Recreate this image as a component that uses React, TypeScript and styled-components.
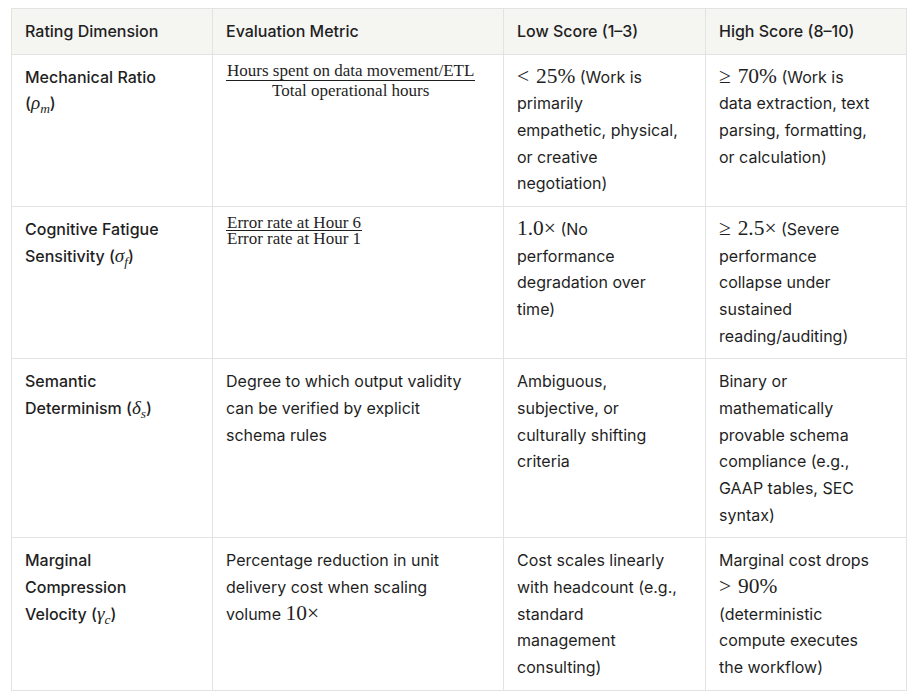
import React from 'react';
import styled, { createGlobalStyle } from 'styled-components';

const GlobalStyle = createGlobalStyle`
  html, body {
    margin: 0;
    padding: 0;
    background: #ffffff;
  }
  body {
    font-family: Inter, "Open Sans", Arial, sans-serif;
    color: #1f1f1f;
  }
`;

const Page = styled.div`
  padding: 8px 10px 8px 11px;
`;

const Table = styled.table`
  width: 895px;
  border-collapse: collapse;
  table-layout: fixed;
  font-size: 16px;
  line-height: 26.67px;
`;

const HeadCell = styled.th`
  background: #f5f5f2;
  border: 1px solid #e3e3e3;
  padding: 9px 13px;
  text-align: left;
  font-weight: 500;
  vertical-align: top;
  white-space: nowrap;
`;

const Cell = styled.td<{ $label?: boolean }>`
  border: 1px solid #e3e3e3;
  padding: 9px 13px;
  vertical-align: top;
  font-weight: ${(p) => (p.$label ? 500 : 400)};
`;

const Line = styled.span`
  display: block;
  white-space: nowrap;
`;

const Math = styled.span`
  font-family: "Liberation Serif", "DejaVu Serif", serif;
  font-size: 1.34em;
  font-weight: 400;
  white-space: nowrap;
  line-height: 0;
`;

const Rel = styled.span`
  margin-right: 0.32em;
`;

const Var = styled.i`
  font-family: "Liberation Serif", "DejaVu Serif", serif;
  font-size: 1.2em;
  font-weight: 400;
  line-height: 0;
`;

const Sub = styled.span`
  font-size: 0.7em;
  font-style: italic;
  vertical-align: -0.3em;
  line-height: 0;
`;

const Frac = styled.span<{ $tight?: boolean }>`
  display: inline-flex;
  flex-direction: column;
  align-items: center;
  vertical-align: top;
  font-family: "Liberation Serif", "DejaVu Serif", serif;
  font-size: 17px;
  margin-top: ${(p) => (p.$tight ? '0' : '-1px')};
`;

const Num = styled.span<{ $tight?: boolean }>`
  border-bottom: 1px solid #1f1f1f;
  padding: 0 1px ${(p) => (p.$tight ? '0' : '1px')};
  line-height: ${(p) => (p.$tight ? '14px' : '16px')};
`;

const Den = styled.span<{ $tight?: boolean }>`
  padding-top: ${(p) => (p.$tight ? '1px' : '2px')};
  line-height: ${(p) => (p.$tight ? '14px' : '16px')};
`;

const Lines = ({ items }: { items: React.ReactNode[] }) => (
  <>
    {items.map((t, i) => (
      <Line key={i}>{t}</Line>
    ))}
  </>
);

type Row = {
  label: React.ReactNode[];
  metric: React.ReactNode;
  low: React.ReactNode[];
  high: React.ReactNode[];
};

const rows: Row[] = [
  {
    label: [
      'Mechanical Ratio',
      <>
        (<Var>ρ<Sub>m</Sub></Var>)
      </>,
    ],
    metric: (
      <Frac>
        <Num>Hours spent on data movement/ETL</Num>
        <Den>Total operational hours</Den>
      </Frac>
    ),
    low: [
      <>
        <Math><Rel>&lt;</Rel>25%</Math> (Work is
      </>,
      'primarily',
      'empathetic, physical,',
      'or creative',
      'negotiation)',
    ],
    high: [
      <>
        <Math><Rel>≥</Rel>70%</Math> (Work is
      </>,
      'data extraction, text',
      'parsing, formatting,',
      'or calculation)',
    ],
  },
  {
    label: [
      'Cognitive Fatigue',
      <>
        Sensitivity (<Var>σ<Sub>f</Sub></Var>)
      </>,
    ],
    metric: (
      <Frac $tight>
        <Num $tight>Error rate at Hour 6</Num>
        <Den $tight>Error rate at Hour 1</Den>
      </Frac>
    ),
    low: [
      <>
        <Math>1.0×</Math> (No
      </>,
      'performance',
      'degradation over',
      'time)',
    ],
    high: [
      <>
        <Math><Rel>≥</Rel>2.5×</Math> (Severe
      </>,
      'performance',
      'collapse under',
      'sustained',
      'reading/auditing)',
    ],
  },
  {
    label: [
      'Semantic',
      <>
        Determinism (<Var>δ<Sub>s</Sub></Var>)
      </>,
    ],
    metric: (
      <Lines
        items={['Degree to which output validity', 'can be verified by explicit', 'schema rules']}
      />
    ),
    low: ['Ambiguous,', 'subjective, or', 'culturally shifting', 'criteria'],
    high: [
      'Binary or',
      'mathematically',
      'provable schema',
      'compliance (e.g.,',
      'GAAP tables, SEC',
      'syntax)',
    ],
  },
  {
    label: [
      'Marginal',
      'Compression',
      <>
        Velocity (<Var>γ<Sub>c</Sub></Var>)
      </>,
    ],
    metric: (
      <Lines
        items={[
          'Percentage reduction in unit',
          'delivery cost when scaling',
          <>
            volume <Math>10×</Math>
          </>,
        ]}
      />
    ),
    low: ['Cost scales linearly', 'with headcount (e.g.,', 'standard', 'management', 'consulting)'],
    high: [
      'Marginal cost drops',
      <Math>
        <Rel>&gt;</Rel>90%
      </Math>,
      '(deterministic',
      'compute executes',
      'the workflow)',
    ],
  },
];

export default function App() {
  return (
    <>
      <GlobalStyle />
      <Page>
        <Table>
          <colgroup>
            <col style={{ width: 201 }} />
            <col style={{ width: 291 }} />
            <col style={{ width: 202 }} />
            <col style={{ width: 201 }} />
          </colgroup>
          <thead>
            <tr>
              <HeadCell>Rating Dimension</HeadCell>
              <HeadCell>Evaluation Metric</HeadCell>
              <HeadCell>Low Score (1–3)</HeadCell>
              <HeadCell>High Score (8–10)</HeadCell>
            </tr>
          </thead>
          <tbody>
            {rows.map((r, i) => (
              <tr key={i}>
                <Cell $label>
                  <Lines items={r.label} />
                </Cell>
                <Cell>{r.metric}</Cell>
                <Cell>
                  <Lines items={r.low} />
                </Cell>
                <Cell>
                  <Lines items={r.high} />
                </Cell>
              </tr>
            ))}
          </tbody>
        </Table>
      </Page>
    </>
  );
}
